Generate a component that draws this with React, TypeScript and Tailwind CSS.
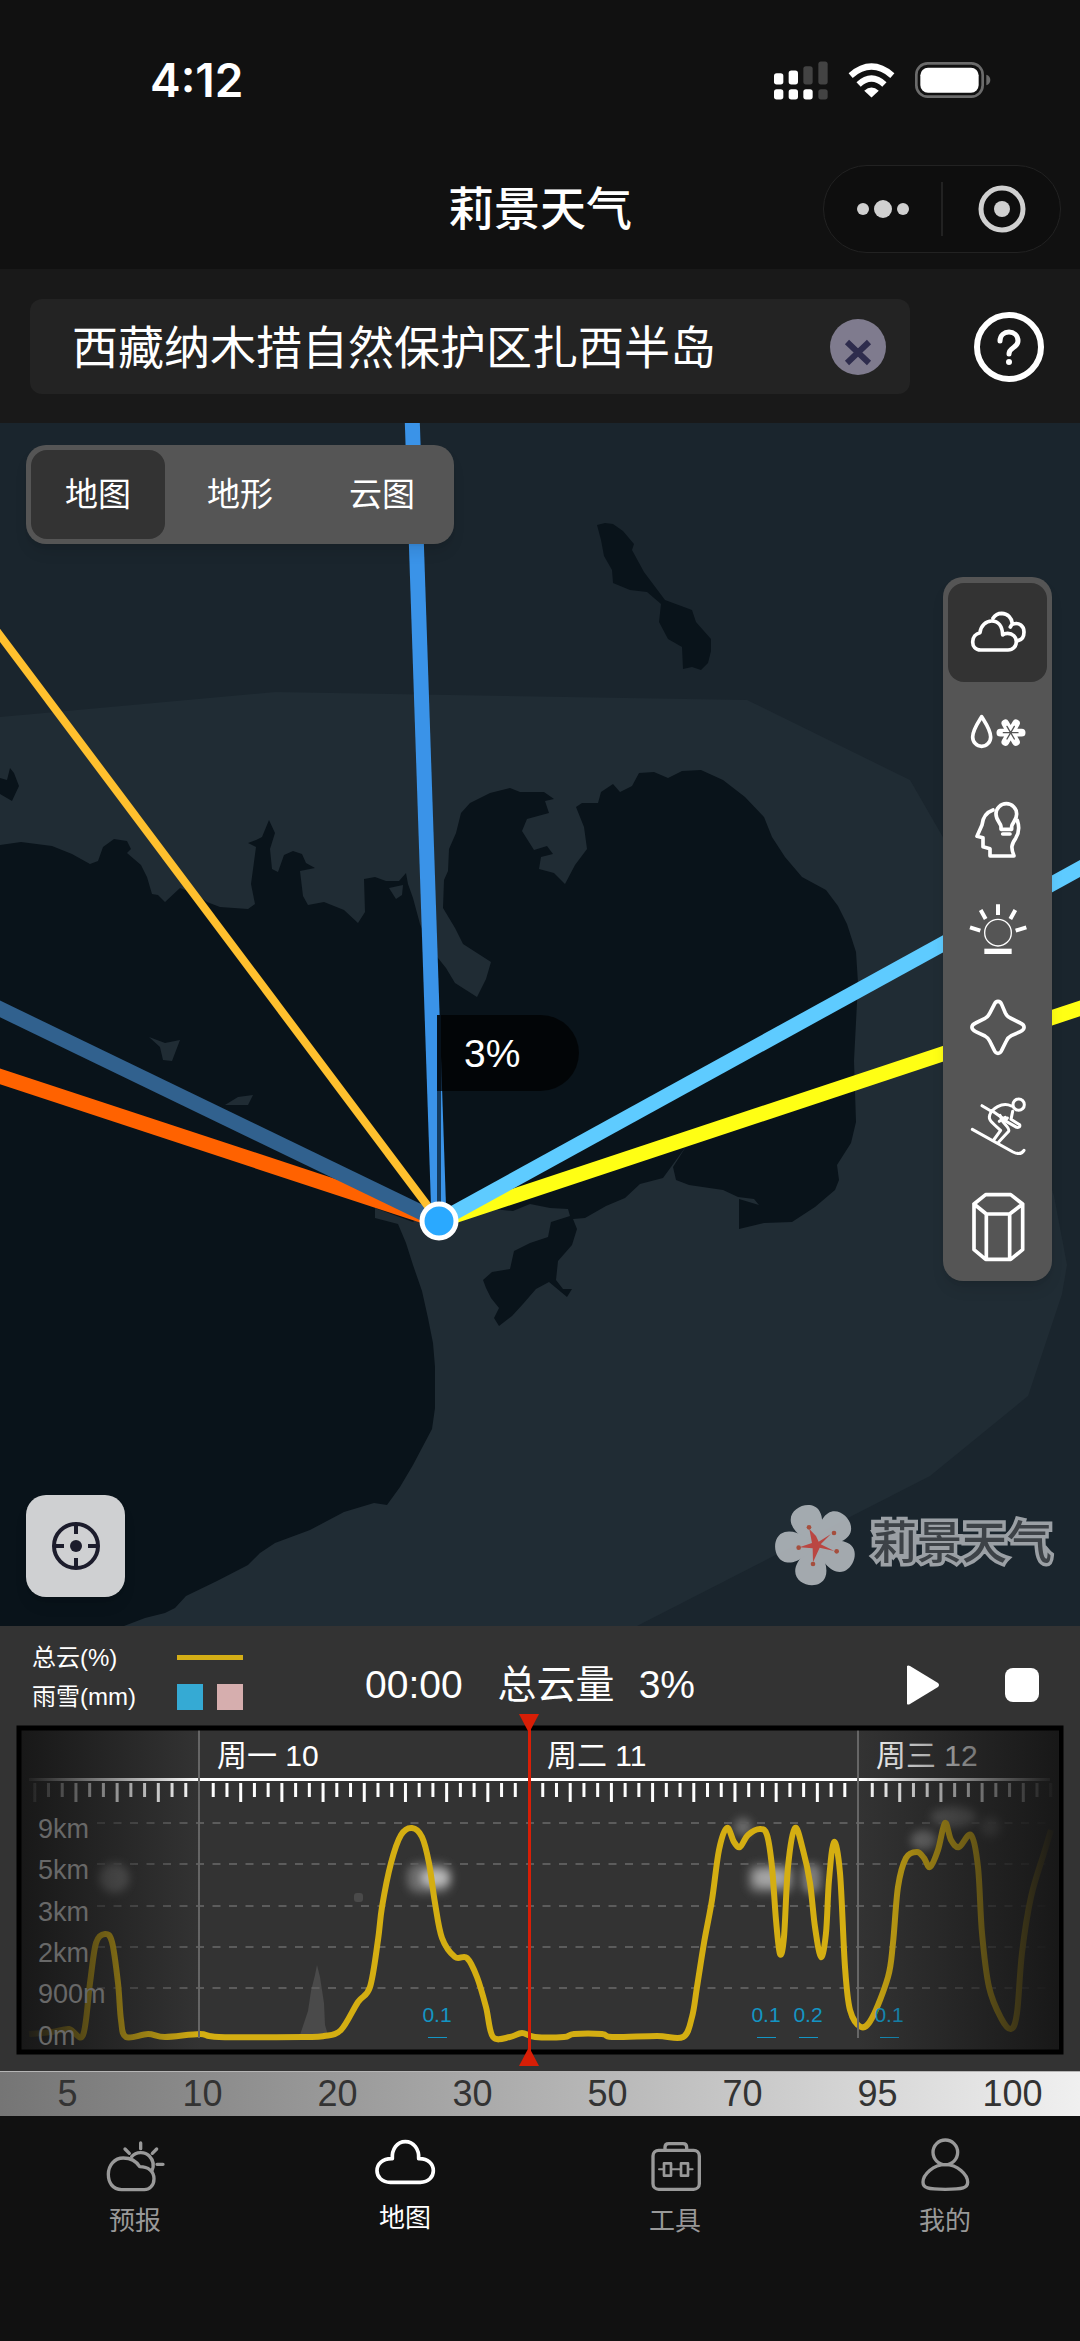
import React, { useState } from 'react';

type Point = [number, number];

const LAYERS = ['地图', '地形', '云图'];

const SCALE = [5, 10, 20, 30, 50, 70, 95, 100];

const HEIGHTS = ['9km', '5km', '3km', '2km', '900m', '0m'];

const DAYS = [
  { x: 183, label: '周一 10' },
  { x: 513, label: '周二 11' },
  { x: 842, label: '周三 12' },
];

const RAIN = [
  { x: 421, value: '0.1' },
  { x: 750, value: '0.1' },
  { x: 792, value: '0.2' },
  { x: 873, value: '0.1' },
];

const CLOUD_CURVE: Point[] = [
  [13, 309], [36, 307], [53, 304], [67, 310], [74, 258], [80, 218], [89, 209], [96, 217], [102, 258],
  [105, 295], [110, 312], [132, 309], [149, 312], [184, 309], [203, 312], [287, 312], [308, 311],
  [325, 305], [342, 277], [354, 262], [362, 215], [366, 182], [375, 138], [385, 110], [396, 103],
  [406, 112], [413, 138], [419, 178], [426, 213], [439, 232], [451, 233], [461, 252], [470, 282],
  [477, 312], [494, 312], [506, 308], [519, 312], [548, 312], [558, 309], [586, 309], [596, 312],
  [641, 311], [667, 312], [676, 292], [681, 262], [688, 218], [696, 175], [703, 125], [711, 103],
  [718, 117], [724, 122], [732, 110], [744, 104], [751, 110], [756, 142], [760, 195], [764, 229],
  [768, 212], [772, 142], [779, 103], [787, 125], [794, 158], [799, 202], [805, 232], [810, 208],
  [813, 155], [818, 117], [824, 148], [829, 242], [834, 285], [845, 302], [856, 293], [872, 252],
  [877, 218], [882, 162], [890, 133], [901, 127], [908, 133], [914, 142], [922, 125], [929, 98],
  [935, 115], [943, 122], [955, 110], [962, 142], [966, 208], [973, 262], [985, 293], [995, 304],
  [1001, 288], [1006, 228], [1015, 172], [1028, 128], [1035, 105],
];

// Catmull-Rom spline through the samples
function smoothPath(points: Point[]) {
  let d = `M${points[0][0]} ${points[0][1]}`;
  for (let i = 0; i < points.length - 1; i++) {
    const p0 = points[i - 1] ?? points[i];
    const p1 = points[i];
    const p2 = points[i + 1];
    const p3 = points[i + 2] ?? p2;
    d += ` C${p1[0] + (p2[0] - p0[0]) / 6} ${p1[1] + (p2[1] - p0[1]) / 6}`;
    d += ` ${p2[0] - (p3[0] - p1[0]) / 6} ${p2[1] - (p3[1] - p1[1]) / 6} ${p2[0]} ${p2[1]}`;
  }
  return d;
}

function StrokeIcon({ children, width = 11 }: { children: React.ReactNode; width?: number }) {
  return (
    <svg
      viewBox="0 0 180 180"
      className="size-[60px] overflow-visible"
      fill="none"
      stroke="currentColor"
      strokeWidth={width}
      strokeLinecap="round"
      strokeLinejoin="round"
      aria-hidden="true"
    >
      {children}
    </svg>
  );
}

const TOOLS = [
  {
    name: '云量',
    icon: (
      <StrokeIcon>
        <path d="M38 141C22 141 14 129 14 117C14 103 23 92 36 89C38 68 54 54 71 54C91 54 103 69 104 96C108 92 114 91 119 91C134 91 145 102 145 116C145 130 135 141 120 141Z" />
        <path d="M75 46C82 35 92 31 101 31C119 32 131 44 133 62L127 72M133 64C154 56 168 70 168 87C168 102 160 111 150 113" />
      </StrokeIcon>
    ),
  },
  {
    name: '雨雪',
    icon: (
      <StrokeIcon>
        <path d="M41 44C30 62 14 84 14 105A27 28 0 0 0 68 105C68 84 52 62 41 44Z" />
        <path strokeWidth="23" d="M97 92H161M112 64L144 120M144 64L112 120" />
        <path stroke="#555" strokeWidth="4" d="M106 92H150M117 73L139 111M139 73L117 111" />
      </StrokeIcon>
    ),
  },
  {
    name: '智能',
    icon: (
      <StrokeIcon>
        <path d="M75 27C52 35 44 52 42 72L27 106L45 110V137L66 143V165H138C128 140 130 130 143 112C157 90 152 70 148 58" />
        <path d="M99 85V76C98 66 84 58 84 39A31 31 0 0 1 146 39C146 58 132 66 131 76V85ZM104 99H126" />
      </StrokeIcon>
    ),
  },
  {
    name: '日出日落',
    icon: (
      <StrokeIcon width={12}>
        <circle cx="90" cy="98" r="40" strokeWidth="4" />
        <path strokeLinecap="butt" strokeWidth="16" d="M49 154H131" />
        <path
          strokeLinecap="butt"
          d="M90 13V45M38 30L53 57M142 30L127 57M6 82L37 92M175 82L143 92"
        />
      </StrokeIcon>
    ),
  },
  {
    name: '星空',
    icon: (
      <StrokeIcon>
        <path d="M79 16C84 4 96 4 101 16L112 42Q117 53 127 57L157 72C172 79 172 91 157 98L130 110Q120 115 115 126L101 154C96 166 84 166 79 154L65 126Q60 116 51 111L23 98C8 91 8 79 23 72L51 58Q60 54 65 43Z" />
      </StrokeIcon>
    ),
  },
  {
    name: '滑雪',
    icon: (
      <StrokeIcon width={9}>
        <circle cx="152" cy="20" r="17" />
        <path d="M42 23L70 40M13 94L135 162Q158 173 168 157" />
        <path d="M130 24C102 10 70 34 65 52C60 66 72 74 98 97L77 126M92 132L122 100C126 90 114 84 104 70L96 52" />
        <path d="M72 38L112 66M134 40L129 64L155 80Q158 90 146 88L100 62M94 70L112 58M110 70L118 60" />
      </StrokeIcon>
    ),
  },
  {
    name: '剖面',
    icon: (
      <StrokeIcon>
        <path d="M53 -7H128L164 21L125 51H55L18 21ZM18 21V158L53 187H128L164 158V21M55 51V187M125 51V187" />
      </StrokeIcon>
    ),
  },
];

const TABS = [
  {
    label: '预报',
    icon: (
      <StrokeIcon width={10}>
        <path d="M50 161C22 161 10 138 10 115C10 88 28 66 55 66C78 66 94 76 104 92C130 92 147 106 147 128C147 150 132 161 118 161Z" />
        <path d="M80 62C93 46 120 46 133 60C146 74 147 90 141 104M107 21V38M60 39L73 52M155 39L142 52M156 85H174" />
      </StrokeIcon>
    ),
  },
  {
    label: '地图',
    icon: (
      <StrokeIcon>
        <path d="M46 139C20 139 6 122 6 104C6 84 22 67 52 68C50 40 66 17 91 17C116 17 133 40 131 68C160 67 175 84 175 104C175 122 161 139 136 139Z" />
      </StrokeIcon>
    ),
  },
  {
    label: '工具',
    icon: (
      <StrokeIcon width={10}>
        <rect x="24" y="43" width="139" height="117" rx="17" />
        <path d="M60 42V34Q60 23 71 23H114Q125 23 125 34V42" />
        <path strokeWidth="6" d="M42 100H57M79 100H107M129 100H143" />
        <rect x="57" y="82" width="21" height="37" strokeWidth="8" />
        <rect x="108" y="82" width="21" height="37" strokeWidth="8" />
      </StrokeIcon>
    ),
  },
  {
    label: '我的',
    icon: (
      <StrokeIcon width={10}>
        <circle cx="91" cy="49" r="37" />
        <path d="M91 86C55 86 24 115 24 139C24 156 38 160 91 160C144 160 158 156 158 139C158 115 127 86 91 86Z" />
      </StrokeIcon>
    ),
  },
];

function StatusBar() {
  return (
    <div className="flex h-40 items-center justify-between pl-[150px] pr-[89px]">
      <span className="font-[Inter,sans-serif] text-[46px] leading-none font-semibold">4:12</span>
      <div className="flex items-center gap-5">
        <svg viewBox="44 62 162 116" className="h-[39px] w-[54px]" fill="#fff" aria-hidden="true">
          <rect x="44" y="98" width="28" height="34" rx="8" />
          <rect x="88" y="90" width="28" height="42" rx="8" />
          <rect x="132" y="77" width="28" height="55" rx="8" fill="#434343" />
          <rect x="177" y="63" width="28" height="69" rx="8" fill="#434343" />
          <rect x="44" y="146" width="28" height="31" rx="8" />
          <rect x="88" y="146" width="28" height="31" rx="8" />
          <rect x="132" y="146" width="28" height="31" rx="8" />
          <rect x="177" y="146" width="28" height="31" rx="8" fill="#434343" />
        </svg>
        <svg viewBox="264 68 142 104" className="h-[35px] w-[47px]" aria-hidden="true">
          <path d="M335 171L313 151Q335 131 357 151Z" fill="#fff" />
          <path d="M296 132Q335 96 374 132" fill="none" stroke="#fff" strokeWidth="19" />
          <path d="M272 105Q335 51 398 105" fill="none" stroke="#fff" strokeWidth="19" />
        </svg>
        <svg viewBox="465 66 228 108" className="h-[36px] w-[76px]" aria-hidden="true">
          <rect x="469" y="70" width="199" height="100" rx="34" fill="none" stroke="#6b6b6b" strokeWidth="8" />
          <rect x="481" y="83" width="175" height="75" rx="23" fill="#fff" />
          <path d="M679 104Q691 108 691 120Q691 132 679 136Z" fill="#6b6b6b" />
        </svg>
      </div>
    </div>
  );
}

function TitleBar() {
  return (
    <div className="flex items-center px-[19px] pt-[5px] pb-4">
      <div className="flex-1" />
      <h1 className="text-[46px] leading-[56px] font-medium">莉景天气</h1>
      <div className="flex flex-1 justify-end">
        <div className="flex h-[88px] w-[238px] items-center rounded-full border border-[#222] bg-[#0e0e0e]">
          <button type="button" aria-label="更多" className="flex h-full flex-1 items-center justify-center">
            <svg viewBox="0 0 52 20" className="h-5 w-[52px]" fill="#d0d0d0" aria-hidden="true">
              <circle cx="6" cy="10" r="6" />
              <circle cx="26" cy="10" r="9" />
              <circle cx="46" cy="10" r="6" />
            </svg>
          </button>
          <div className="h-[54px] w-0.5 bg-[#222]" />
          <button type="button" aria-label="关闭" className="flex h-full flex-1 items-center justify-center">
            <svg viewBox="0 0 48 48" className="size-12" aria-hidden="true">
              <circle cx="24" cy="24" r="21" fill="none" stroke="#d0d0d0" strokeWidth="5" />
              <circle cx="24" cy="24" r="8" fill="#d0d0d0" />
            </svg>
          </button>
        </div>
      </div>
    </div>
  );
}

function SearchBar() {
  const [place, setPlace] = useState('西藏纳木措自然保护区扎西半岛');

  return (
    <div className="flex items-center bg-[#191919] pt-[30px] pr-9 pb-[29px] pl-[30px]">
      <div className="flex h-[95px] min-w-0 flex-1 items-center rounded-xl bg-[#232323] pr-6 pl-[42px]">
        <input
          type="text"
          aria-label="地点"
          value={place}
          onChange={(e) => setPlace(e.target.value)}
          className="min-w-0 flex-1 bg-transparent pt-0.5 text-[46px] leading-[60px] text-white outline-none"
        />
        <button type="button" aria-label="清除" onClick={() => setPlace('')} className="shrink-0">
          <svg viewBox="0 0 56 56" className="size-14" aria-hidden="true">
            <circle cx="28" cy="28" r="28" fill="#7f7b8e" />
            <path d="M17 23L39 44M39 23L17 44" stroke="#2e2c4d" strokeWidth="6" />
          </svg>
        </button>
      </div>
      <button type="button" aria-label="帮助" className="ml-16 shrink-0">
        <svg viewBox="0 0 70 70" className="size-[70px]" fill="none" stroke="#fff" aria-hidden="true">
          <circle cx="35" cy="35" r="32" strokeWidth="6" />
          <path d="M26 29C26 17 44 17 44 29C44 36 35 35 35 42" strokeWidth="5" strokeLinecap="round" />
          <circle cx="35" cy="50" r="3" fill="#fff" stroke="none" />
        </svg>
      </button>
    </div>
  );
}

function MapCanvas() {
  return (
    <svg
      viewBox="0 0 1080 1203"
      preserveAspectRatio="xMidYMid slice"
      className="absolute inset-0 h-full w-full"
      role="img"
      aria-label="纳木措地图"
    >
      <rect width="1080" height="1203" fill="#1a252d" />
      <path
        fill="#202c34"
        d="M0 294L275 269L747 277L910 357L944 416L1054 773L1067 842L1062 871L1028 973L930 1053L637 1203H0Z"
      />
      <g fill="#09131a">
        <path d="M597 102L605 100L613 101L623 108L634 121L632 127L644 149L665 177L692 187L696 199L711 216L711 228L708 240L701 247L692 244L683 246L682 224L668 216L659 199L661 181L647 169L630 167L613 160L612 147L604 133L601 117Z" />
        <path d="M0 355L7 357L10 345L14 350L19 363L12 378L0 371Z" />
        <path
          d="M0 422L21 419L52 423L72 431L90 441L98 438L103 424L114 416L127 418L131 426L127 430L141 442L147 454L152 471L158 472L165 479L180 465L196 471L207 479L220 484L248 486L255 481L251 461L256 424L248 420L256 417L262 414L269 397L275 410L270 426L272 446L278 449L284 432L293 428L302 431L306 440L315 445L300 448L303 473L308 482L324 479L344 487L358 500L365 489L364 456L375 454L386 458L399 458L406 450L408 461L413 475L420 501L430 525L446 545L455 560L477 574L486 556L491 539L463 521L455 505L443 485L444 457L448 448L449 426L456 410L461 390L470 380L490 370L510 365L520 369L544 369L554 376L545 378L549 390L527 396L522 408L534 427L547 423L553 431L541 434L539 446L554 450L565 461L575 442L587 426L584 404L576 384L582 380L598 380L601 369L613 361L620 369L632 363L639 350L654 349L668 355L682 348L701 347L723 357L745 374L764 394L772 414L785 434L802 454L826 467L838 483L847 501L856 529L858 560L854 638L856 699L851 720L837 742L839 757L835 767L815 784L792 799L764 800L739 806V776L759 782L754 776L738 774L723 767L689 762L676 757L673 744L687 722L671 744L663 755L640 761L625 775L606 783L585 795L573 796L577 806L572 822L558 838L556 857L563 866L572 866L567 874L549 859L536 866L523 881L512 893L499 903L494 895L499 885L491 875L486 865L483 857L492 849L510 846L514 828L530 820L548 814L551 799L570 793L568 786L550 785L530 781L513 788L482 785L439 781L413 799L375 785V795L398 801L406 820L413 842L422 868L428 895L433 920L435 944V985L432 1006L413 1042L400 1064L387 1082L374 1080L344 1089L310 1107L275 1120L260 1130L248 1142L217 1158L186 1173L175 1185L165 1190L145 1195L124 1203H0Z"
        />
      </g>
      <g fill="#202c34">
        <path d="M149 614L165 620L180 617L172 638L163 637L160 624Z" />
        <path d="M225 682L238 674L253 672L248 682Z" />
        <path d="M389 465L403 462L402 472L396 476Z" />
      </g>
      <g strokeWidth="15">
        <path d="M439 798L-10 650" stroke="#ff6200" />
        <path d="M439 798L-10 581" stroke="#31618e" />
        <path d="M439 798L-10 199" stroke="#ffc02e" strokeWidth="8" />
        <path d="M439 798L1090 582" stroke="#ffff14" />
        <path d="M439 798L1090 440" stroke="#5ecbff" />
        <path d="M439 798L412 -10" stroke="#3a93e8" />
        <path d="M439 798V592" stroke="#153a5c" strokeWidth="4" />
      </g>
      <circle cx="439" cy="798" r="17" fill="#2aa9ff" stroke="#fff" strokeWidth="5" />
      <path d="M437 592H541A38 38 0 0 1 541 668H437Z" fill="#000" fillOpacity="0.7" />
      <text x="464" y="644" fontSize="39" fill="#fff" className="font-['Liberation_Sans',sans-serif]">
        3%
      </text>
    </svg>
  );
}

function LayerSwitch() {
  const [active, setActive] = useState(0);

  return (
    <div className="absolute top-[22px] left-[26px] flex gap-2 rounded-[20px] bg-[#555] p-[5px] shadow-lg">
      {LAYERS.map((layer, i) => (
        <button
          key={layer}
          type="button"
          aria-pressed={i === active}
          onClick={() => setActive(i)}
          className={`h-[89px] w-[134px] rounded-2xl text-[33px] ${i === active ? 'bg-[#333]' : ''}`}
        >
          {layer}
        </button>
      ))}
    </div>
  );
}

function Toolbar() {
  const [active, setActive] = useState(0);

  return (
    <div className="absolute top-[154px] right-[28px] flex flex-col rounded-[20px] bg-[#555] px-[5px] pt-1.5 pb-[5px] shadow-lg">
      {TOOLS.map((tool, i) => (
        <button
          key={tool.name}
          type="button"
          aria-label={tool.name}
          aria-pressed={i === active}
          onClick={() => setActive(i)}
          className={`flex size-[99px] items-center justify-center rounded-2xl ${i === active ? 'bg-[#333]' : ''}`}
        >
          {tool.icon}
        </button>
      ))}
    </div>
  );
}

function Watermark() {
  return (
    <div className="absolute right-7 bottom-[42px] flex items-center gap-4 opacity-90">
      <svg viewBox="0 0 240 240" className="size-20 overflow-visible" aria-hidden="true">
        <g fill="#b2b8bd">
          {[-21, 48, 116, 191, 265].map((angle) => (
            <path
              key={angle}
              transform={`rotate(${angle} 120 122)`}
              d="M120 130C102 106 68 66 74 32C82 -12 158 -12 166 32C172 66 138 106 120 130Z"
            />
          ))}
        </g>
        <path d="M120 96L128 113L165 90L134 121L175 141L131 131L111 175L110 133L70 130L108 117L100 75Z" fill="#cc4a45" />
        <g fill="#b5533f">
          <circle cx="99" cy="70" r="7" />
          <circle cx="174" cy="87" r="7" />
          <circle cx="182" cy="142" r="7" />
          <circle cx="111" cy="180" r="7" />
          <circle cx="68" cy="131" r="7" />
        </g>
      </svg>
      <span className="text-[45px] leading-[56px] font-medium text-[#41464a] [paint-order:stroke] [-webkit-text-stroke:7px_#a9aeb2]">
        莉景天气
      </span>
    </div>
  );
}

function MapView() {
  return (
    <main className="relative min-h-[900px] flex-1 overflow-hidden">
      <MapCanvas />
      <LayerSwitch />
      <Toolbar />
      <button
        type="button"
        aria-label="定位"
        className="absolute bottom-[29px] left-[26px] flex h-[102px] w-[99px] items-center justify-center rounded-[20px] bg-[#cfd0d2] shadow-lg"
      >
        <svg viewBox="0 0 50 50" className="size-[50px]" fill="none" stroke="#1c1c2c" strokeWidth="4" aria-hidden="true">
          <circle cx="25" cy="25" r="22" />
          <path d="M25 3V13M25 37V47M3 25H13M37 25H47" />
          <circle cx="25" cy="25" r="6" fill="#1c1c2c" stroke="none" />
        </svg>
      </button>
      <Watermark />
    </main>
  );
}

function ChartControls() {
  return (
    <div className="flex items-center pt-3 pr-[41px] pb-[9px] pl-8">
      <div className="grid grid-cols-[145px_66px] items-center text-[24px] leading-[39px]">
        <span>总云(%)</span>
        <span className="h-[5px] bg-[#d4ae16]" />
        <span>雨雪(mm)</span>
        <span className="flex justify-between">
          <span className="size-[26px] bg-[#35aad4]" />
          <span className="size-[26px] bg-[#d6aeae]" />
        </span>
      </div>
      <div className="mt-4 ml-[122px] flex flex-1 items-center text-[39px] leading-[56px]">
        <span className="mr-[35px]">00:00</span>
        <span className="mr-6">总云量</span>
        <span>3%</span>
      </div>
      <div className="mt-4 flex items-center gap-16">
        <button type="button" aria-label="播放">
          <svg viewBox="0 0 36 40" className="h-10 w-9" fill="#fff" aria-hidden="true">
            <path d="M2 1Q3 0 5 1L33 18Q35 20 33 22L5 39Q3 40 2 39Z" />
          </svg>
        </button>
        <button type="button" aria-label="停止" className="size-[34px] rounded-lg bg-white" />
      </div>
    </div>
  );
}

function Chart() {
  const ticks = Array.from({ length: 76 }, (_, i) => i - 12).filter((hour) => hour % 24 !== 0 && hour <= 62);

  return (
    <svg
      viewBox="0 0 1048 330"
      className="relative block w-full overflow-visible font-['Liberation_Sans','Noto_Sans_CJK_SC',sans-serif]"
      role="img"
      aria-label="总云量与雨雪时间曲线"
    >
      <defs>
        <linearGradient id="fadeLeft">
          <stop offset="0" stopColor="#181818" />
          <stop offset="1" stopColor="#181818" stopOpacity="0" />
        </linearGradient>
        <linearGradient id="fadeRight">
          <stop offset="0" stopColor="#181818" stopOpacity="0" />
          <stop offset="1" stopColor="#181818" />
        </linearGradient>
        <filter id="soft" x="-50%" y="-50%" width="200%" height="200%">
          <feGaussianBlur stdDeviation="4" />
        </filter>
      </defs>
      <rect x="3" y="3" width="1042" height="324" fill="#333" />

      <path d="M284 310L288 298L292 286L295 266L299 250L301 240L304 252L308 278L309 300L312 310Z" fill="#4a4a4a" />
      <rect x="338" y="168" width="9" height="9" rx="3" fill="#4a4a4a" />
      <g filter="url(#soft)">
        <circle cx="98" cy="153" r="15" fill="#686868" />
        <rect x="391" y="138" width="45" height="30" rx="12" fill="#6b6b6b" />
        <ellipse cx="419" cy="153" rx="14" ry="8" fill="#bbb" />
        <circle cx="727" cy="102" r="9" fill="#6b6b6b" />
        <rect x="732" y="139" width="46" height="29" rx="9" fill="#6b6b6b" />
        <rect x="738" y="145" width="34" height="16" rx="8" fill="#a5a5a5" />
        <rect x="786" y="139" width="19" height="29" rx="8" fill="#7b7b7b" />
        <ellipse cx="908" cy="115" rx="13" ry="10" fill="#777" />
        <ellipse cx="938" cy="92" rx="23" ry="10" fill="#666" />
        <circle cx="975" cy="102" r="10" fill="#5c5c5c" />
      </g>

      <g stroke="#5c5c5c" strokeWidth="2" strokeDasharray="8 8.5">
        {[98, 139, 181, 222, 263].map((y) => (
          <path key={y} d={`M81 ${y}H1030`} />
        ))}
      </g>

      <path d={smoothPath(CLOUD_CURVE)} fill="none" stroke="#d4ae12" strokeWidth="6" strokeLinejoin="round" />

      <rect x="13" y="53" width="1021" height="3" fill="#fff" />
      <g fill="#fff">
        {ticks.map((hour) => (
          <rect key={hour} x={182 + hour * 13.73} y="58" width="3" height={hour % 3 === 0 ? 19 : 14} />
        ))}
      </g>
      {DAYS.map((day) => (
        <g key={day.label}>
          <path d={`M${day.x} 5V313`} stroke="#666" strokeWidth="2" />
          <text x={day.x + 18} y="41" fontSize="30" fill="#fff">
            {day.label}
          </text>
        </g>
      ))}

      {RAIN.map((rain) => (
        <g key={rain.x} fill="#1395c4">
          <text x={rain.x} y="297" fontSize="21" textAnchor="middle">
            {rain.value}
          </text>
          <rect x={rain.x - 9} y="312" width="19" height="1" />
        </g>
      ))}

      <rect x="5" y="5" width="180" height="320" fill="url(#fadeLeft)" />
      <rect x="842" y="5" width="200" height="320" fill="url(#fadeRight)" />

      {HEIGHTS.map((height, i) => (
        <text key={height} x="22" y={113 + Math.round(i * 41.3)} fontSize="27" fill="#686868">
          {height}
        </text>
      ))}

      <rect x="3" y="3" width="1042" height="324" fill="none" stroke="#000" strokeWidth="5" />
      <g fill="#d81e06">
        <rect x="512" y="-8" width="3" height="346" />
        <path d="M503 -11H523L513 8Z" />
        <path d="M503 341H523L513 322Z" />
      </g>
    </svg>
  );
}

function ScaleBar() {
  return (
    <div className="grid grid-cols-8 border-t border-[#b5b5b5] bg-linear-to-r from-[#757575] to-[#f0f0f0] text-center text-[36px] leading-[44px] text-[#333]">
      {SCALE.map((value) => (
        <span key={value}>{value}</span>
      ))}
    </div>
  );
}

function TabBar() {
  return (
    <nav className="grid grid-cols-4 pt-5 pb-[102px]">
      {TABS.map((tab) => (
        <a
          key={tab.label}
          href="#"
          aria-current={tab.label === '地图' ? 'page' : undefined}
          className={`flex flex-col items-center text-[26px] leading-[36px] ${
            tab.label === '地图' ? 'gap-1 text-white' : 'gap-[7px] text-[#999]'
          }`}
        >
          {tab.icon}
          {tab.label}
        </a>
      ))}
    </nav>
  );
}

export default function App() {
  return (
    <div className="flex min-h-screen flex-col bg-[#111] font-['Liberation_Sans','Noto_Sans_CJK_SC',sans-serif] text-white">
      <header>
        <StatusBar />
        <TitleBar />
        <SearchBar />
      </header>
      <MapView />
      <section className="bg-[#333]">
        <ChartControls />
        <div className="px-4 pb-4">
          <Chart />
        </div>
      </section>
      <ScaleBar />
      <TabBar />
    </div>
  );
}
